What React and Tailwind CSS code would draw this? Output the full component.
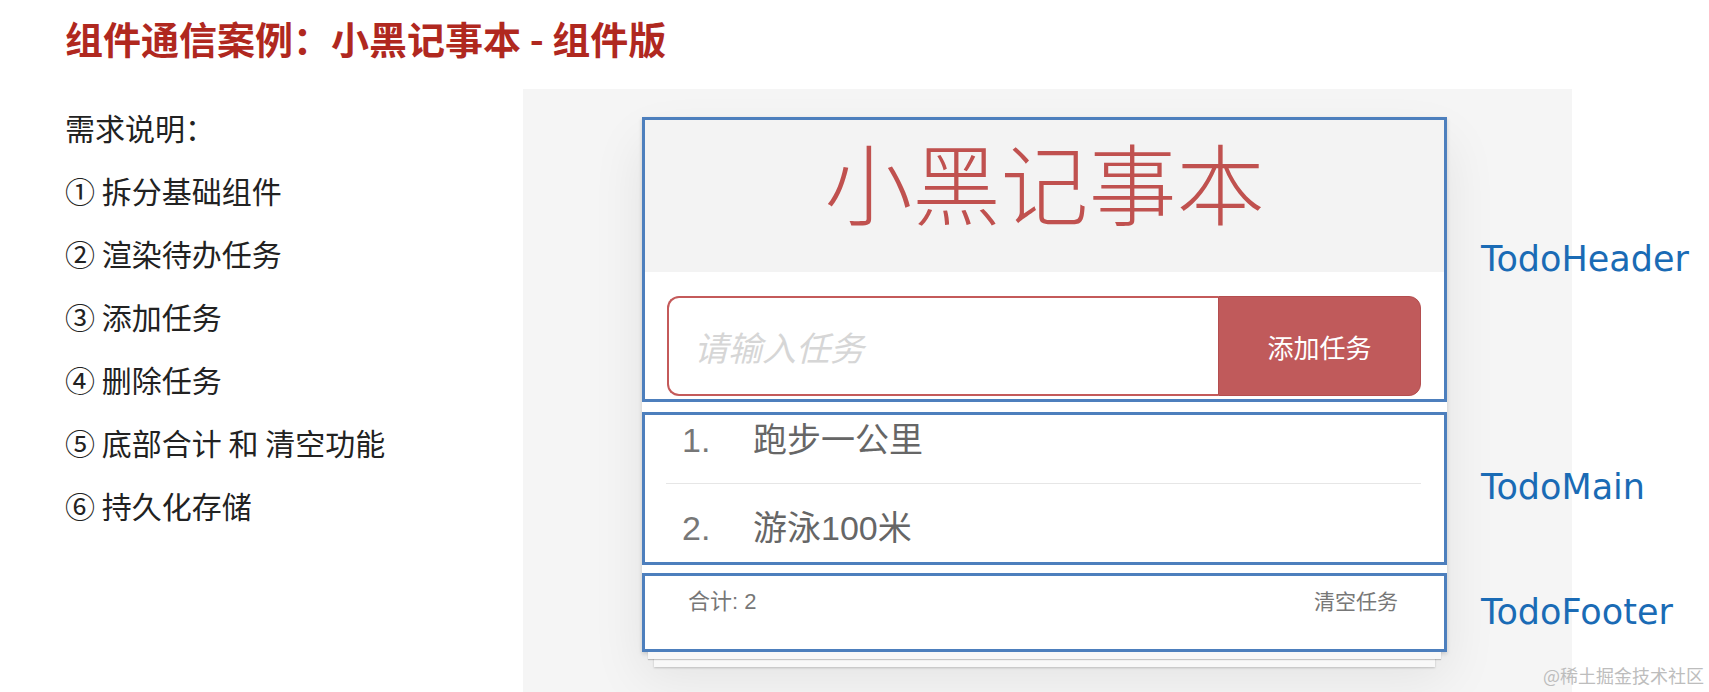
export default function App() {
  const items = [
    "需求说明：",
    "① 拆分基础组件",
    "② 渲染待办任务",
    "③ 添加任务",
    "④ 删除任务",
    "⑤ 底部合计 和 清空功能",
    "⑥ 持久化存储",
  ];
  return (
    <div className="relative w-[1709px] h-[692px] overflow-hidden bg-white [font-family:'Noto_Sans_CJK_SC',sans-serif]">
      <div className="h-[89px] pl-[65px] pt-[16px] text-[38px] leading-[44px] font-bold text-[#b0281f]">
        组件通信案例：小黑记事本 - 组件版
      </div>
      <div className="flex h-[603px]">
        <div className="w-[523px] flex-none pl-[65px] pt-[7px] text-[30px] text-[#222]">
          {items.map((t) => (
            <div key={t} className="h-[63px] leading-[63px] whitespace-pre">
              {t}
            </div>
          ))}
        </div>
        <div className="w-[1049px] h-[603px] flex-none bg-[#f5f5f5] pl-[119px] pt-[28px]">
          <div className="w-[805px] bg-white flex flex-col shadow-[0_2px_4px_0_rgba(0,0,0,0.15),0_25px_50px_0_rgba(0,0,0,0.08)]">
            {/* TodoHeader */}
            <div className="h-[285px] border-[3px] border-[#4d7fbd] flex flex-col">
              <div className="h-[152px] bg-[#f3f3f3] text-center pt-[16px] text-[88px] leading-[88px] font-light text-[#c0514f]">
                小黑记事本
              </div>
              <div className="flex-1 bg-white pt-[24px] pl-[22px] pr-[23px]">
                <div className="flex h-[100px]">
                  <div className="flex-1 flex items-center border-2 border-r-0 border-[#c45a5a] rounded-l-[12px] pl-[25px] italic text-[34px] text-[#d6d6d6]">
                    请输入任务
                  </div>
                  <div className="w-[203px] flex-none bg-[#c05a5b] border border-[#b44e4f] rounded-r-[12px] flex items-center justify-center text-white text-[26px]">
                    添加任务
                  </div>
                </div>
              </div>
            </div>
            {/* TodoMain */}
            <div className="mt-[10px] h-[153px] border-[3px] border-[#4d7fbd] pl-[21px] pr-[23px] [font-family:'Liberation_Sans','Noto_Sans_CJK_SC',sans-serif] text-[34px] leading-[44px] text-[#666]">
              <div className="h-[69px] border-b border-[#e6e6e6] pt-[3px] pl-[16px] flex">
                <span className="w-[71px] text-[#777]">1.</span>
                <span>跑步一公里</span>
              </div>
              <div className="pt-[22px] pl-[16px] flex">
                <span className="w-[71px] text-[#777]">2.</span>
                <span>游泳100米</span>
              </div>
            </div>
            {/* TodoFooter */}
            <div className="mt-[8px] h-[79px] bg-white border-[3px] border-[#4d7fbd] pl-[43px] pr-[46px] pt-[14px] flex justify-between leading-[24px] text-[#777] [font-family:'Liberation_Sans','Noto_Sans_CJK_SC',sans-serif] shadow-[0_13px_0_-6px_#f8f8f8,0_14px_1px_-6px_rgba(0,0,0,0.2),0_27px_0_-12px_#f8f8f8,0_28px_2px_-12px_rgba(0,0,0,0.2)]">
              <span className="text-[22px]">合计: 2</span>
              <span className="text-[21px]">清空任务</span>
            </div>
          </div>
        </div>
        <div className="relative z-10 ml-[-91px] pt-[150px] flex flex-col text-[35px] leading-[40px] text-[#1a6bb5] [font-family:'DejaVu_Sans',sans-serif] whitespace-nowrap">
          <div>TodoHeader</div>
          <div className="mt-[188px]">TodoMain</div>
          <div className="mt-[85px]">TodoFooter</div>
        </div>
      </div>
      <div className="absolute left-[1543px] top-[665px] text-[18px] leading-[20px] text-[#bdbdbd] whitespace-nowrap">
        @稀土掘金技术社区
      </div>
    </div>
  );
}
